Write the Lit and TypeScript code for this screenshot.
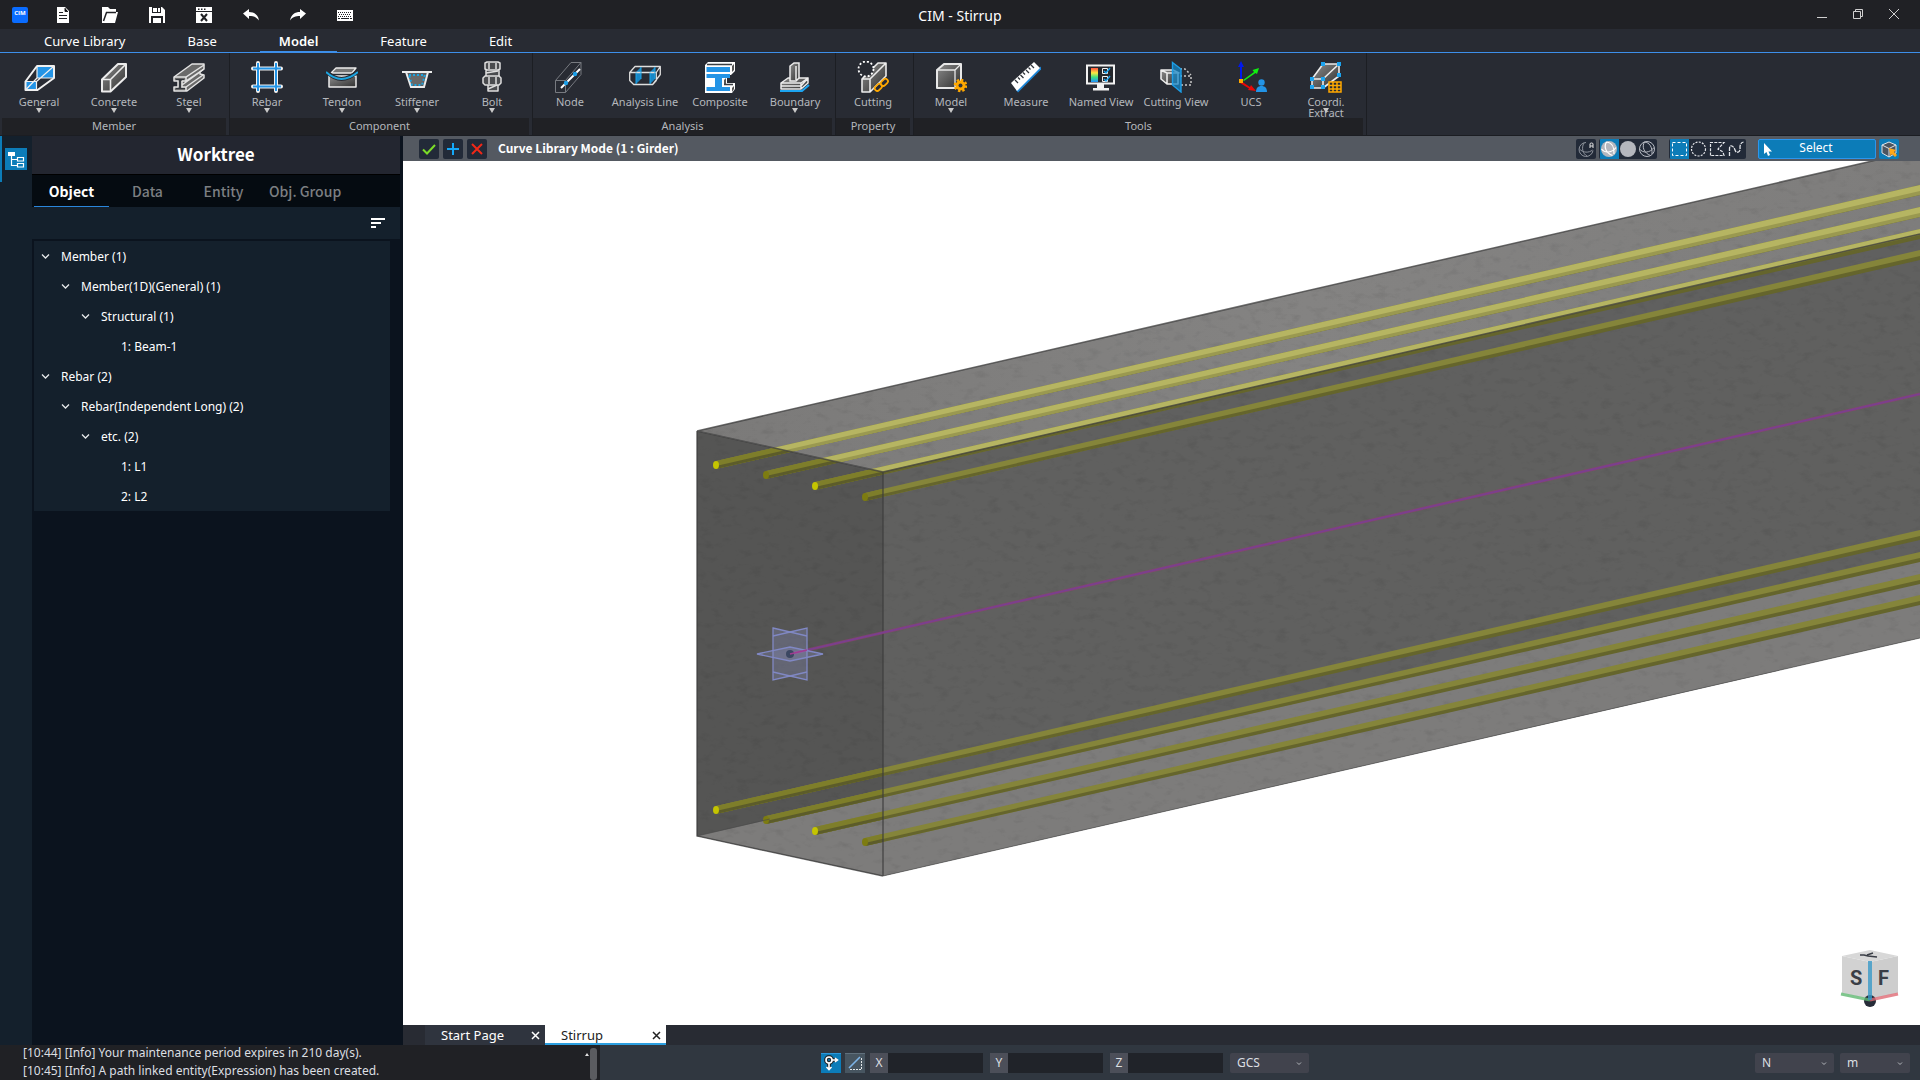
import { LitElement, html, svg, css, nothing, TemplateResult } from "lit";
import { customElement, property } from "lit/decorators.js";
import { classMap } from "lit/directives/class-map.js";

type Drawing = ReturnType<typeof svg>;

/* ---------- icons ---------- */

const icon = (size: number, body: Drawing, cls = "") => html`
  <svg class=${cls} width=${size} height=${size} viewBox="0 0 ${size} ${size}" aria-hidden="true">${body}</svg>`;

const quickIcons: [string, Drawing][] = [
  ["New", svg`<path fill="#fff" d="M2 0h8l4 4v12H2z"/><path stroke="#202125" d="M4 5.500h4M4 8.500h8M4 11.500h8M10 1v3.500h3"/>`],
  ["Open", svg`<path fill="#fff" d="M0 0h6l2 2h6v3h2l-3 11H0z"/><path fill="none" stroke="#202125" stroke-width="1.500" d="M1.500 14L4.500 5.500H14"/>`],
  ["Save", svg`<path fill="#fff" d="M0 0h13l3 3v13H0z"/><path fill="#202125" d="M3 0h9v6H3zM2 9h12v7H2z"/><path fill="#fff" d="M4 1h4v4H4zM9 1h2v4H9zM4 11h8v5H4z"/>`],
  ["Close project", svg`<path fill="#fff" d="M0 0h16v16H0z"/><path stroke="#202125" d="M0 4.500h16"/><path fill="#202125" d="M2 1.500h1.500v1.500H2zM5 1.500h1.500v1.500H5zM8 1.500h1.500v1.500H8z"/><path stroke="#202125" stroke-width="2" d="M5 7l6 7M11 7l-6 7"/>`],
  ["Undo", svg`<path fill="#fff" d="M0 6.500L6 2v3c5 0 9 2.500 10 8.500C13.500 10 10.500 9 6 9v3z"/>`],
  ["Redo", svg`<path fill="#fff" d="M16 6.500L10 2v3C5 5 1 7.500 0 13.500 2.500 10 5.500 9 10 9v3z"/>`],
  ["Keyboard", svg`<path fill="#fff" d="M0 3h16v11H0z"/><path stroke="#202125" stroke-dasharray="1 1" d="M1 5.500h14M2 7.500h12M1 9.500h14"/><path stroke="#202125" d="M1 11.500h2M4 11.500h8M13 11.500h2"/>`],
];

const ribbonIcons: Record<string, Drawing> = {
  General: svg`<path fill="#2394e6" d="M14 5h16v12H14z"/><path fill="#2394e6" d="M3 21h10v8H3z"/>
    <path fill="none" stroke="#f0f0f0" stroke-width="2" stroke-linejoin="round" d="M2.500 29V20.500L14 5h17v12L14.500 29z"/>
    <path fill="none" stroke="#f0f0f0" stroke-width="1.200" d="M3 20.500h10.500V29M13.500 20.500L30.500 5.500M14 5v12h16M14 17L3 28.500"/>`,
  Concrete: svg`<path fill="url(#metal)" stroke="#ececec" stroke-width="2" stroke-linejoin="round" d="M4 18.500L20 3h8v13L12.500 30.500H4z"/>
    <path fill="none" stroke="#ececec" stroke-width="1.600" d="M4 18.500h8.500v12M12.500 18.500L28 3"/>`,
  Steel: svg`<path fill="#6a6a6a" stroke="#e4e4e4" stroke-width="1.500" stroke-linejoin="round" d="M1 16L19 3h12v5l-4 3v2l4 1v3L14 30H1v-4h4v-6H1z"/>
    <path fill="none" stroke="#e4e4e4" stroke-width="1.500" d="M1 16h12L31 4M13 16v4L31 8M9 20h4M9 20v6h4v4M13 26l17-12M9 24l18-13"/>
    <path fill="#33363c" d="M3 18h8v1H8v8h4v1H3v-1h3v-8H3z"/>`,
  Rebar: svg`<g fill="none" stroke="#f2f2f2" stroke-width="4" stroke-linecap="round"><path d="M7 2v28M25 2v28"/><path d="M2 7.500h28M2 25.500h28"/></g>
    <g fill="none" stroke="#2394e6" stroke-width="2"><path d="M7 2v28M25 2v28"/><path d="M2 7.500h28M2 25.500h28"/></g>`,
  Tendon: svg`<path fill="url(#metal)" stroke="#ececec" stroke-width="1.500" stroke-linejoin="round" d="M3 15h27v11H3z"/>
    <path fill="#777" stroke="#ececec" stroke-width="1.300" stroke-linejoin="round" d="M5 12L10 7h20l-4 5z"/><path fill="none" stroke="#282b33" stroke-width="4" d="M1 11Q15 25 31 11"/><path fill="none" stroke="#1ca4e0" stroke-width="2" d="M0 11Q15 25 32 11"/>`,
  Stiffener: svg`<path fill="#5b5e62" stroke="#ececec" stroke-width="2" d="M1 11h30M5 11l5 15h13l4-15"/><path fill="#686868" stroke="#1ca4e0" stroke-width="2" stroke-dasharray="2 2" d="M8 14h16l-3 10H11z"/>`,
  Bolt: svg`<g fill="#4a4b4e" stroke="#dedede" stroke-width="1.500" stroke-linejoin="round"><path d="M9 2l2-1h11l2 1v6l-2 1H11L9 8zM10 9h13v7H10zM12 22h10v8H12z"/><path d="M7 17l2-2h14l2 2v5l-2 2H9l-2-2z"/></g>
    <path fill="none" stroke="#dedede" stroke-width="1.500" d="M13 2v6M20 2v6M13 16v7M20 16v7M12 28l9-4M10 12l12-2"/>`,
  Node: svg`<path fill="none" stroke="#777a80" d="M1.500 19.500h10v12h-10zM1.500 19.500L17 1.500h10v12L11.500 31.500M11.500 19.500L27 1.500"/>
    <path stroke="#fff" stroke-width="2" d="M7 27L26 8"/><circle cx="12" cy="22" r="2.200" fill="#1c9fe8"/><circle cx="21" cy="13" r="2.200" fill="#1c9fe8"/>`,
  "Analysis Line": svg`<path fill="#1787c6" d="M7 11l5-5v12l-5 5zM21 11l5-5v12l-5 5z"/><path fill="none" stroke="#dedede" stroke-width="1.300" stroke-linejoin="round" d="M.700 11.500L6 5.500h25.300l-4 6zM.700 11.500v8l4 4h19l3.600-4v-8M31.300 5.500v8l-7.600 10"/><path fill="none" stroke="#1ca4e8" d="M7 11.500V23M12 6v12M21 11.500V23M26 6v12"/>`,
  Composite: svg`<path fill="#fff" d="M1 4l3-3h27v9l-4 4h-4v8h8v6l-3 4H1z"/><path fill="#555" d="M28 5l2-2v6l-2 2zM20 19l2-2v6l-2 1zM28 27l2-2v3l-2 3z"/><path fill="#2394e6" d="M2.500 6H26v5H2.500zM2.500 13H26v4h-8v9h8v4H2.500v-4H11v-9H2.500z"/><path stroke="#3b3f44" stroke-width="1.300" d="M3 3.500h25M20 23.500h9"/>`,
  Boundary: svg`<path fill="url(#metal)" stroke="#ececec" stroke-width="1.500" stroke-linejoin="round" d="M2 22l7-5h20l-7 8H2zM2 22h20v6H2zM22 22l7-5v5l-7 6z"/><path fill="url(#metal)" stroke="#ececec" stroke-width="1.500" d="M11 5l4-3h5v15l-3 3h-6zM17 5v14"/><path fill="none" stroke="#1ca4f0" stroke-width="2" d="M1 30h22l7-6"/>`,
  Cutting: svg`<path fill="url(#metal)" stroke="#ececec" stroke-width="1.600" stroke-linejoin="round" d="M5 18L21 2h8v13L13 31H5zM5 18h8v13M13 18L29 2"/><circle cx="9" cy="8" r="7.500" fill="#282b33" stroke="#fff" stroke-width="1.800" stroke-dasharray="2 2"/>
    <g fill="none" stroke="#ffa800" stroke-width="1.800"><rect x="17" y="24" width="8" height="5" rx="2.500" transform="rotate(-45 21 26)"/><rect x="23" y="19" width="8" height="5" rx="2.500" transform="rotate(-45 27 21)"/></g>`,
  Model: svg`<path fill="url(#metal)" stroke="#e8e8e8" stroke-width="2" stroke-linejoin="round" d="M2 9l7-6h17v18l-6 6H2z"/><path fill="none" stroke="#e8e8e8" stroke-width="1.300" d="M2 9h18v18M20 9l6-6"/>
    <circle cx="25.500" cy="24.500" r="5" fill="#ffa800"/><circle cx="25.500" cy="24.500" r="5.500" fill="none" stroke="#ffa800" stroke-width="2.500" stroke-dasharray="2.300 2"/><circle cx="25.500" cy="24.500" r="2" fill="#30343b"/>`,
  Measure: svg`<path fill="#1c86d8" d="M8 31.500L31 8.500V5.500L6 29z"/><path fill="#fff" d="M1 22L24 1l6 6L7 30z"/><path stroke="#30343b" stroke-width="1.300" d="M5 19l3 3M8 16.500l2 2M10.500 14l3 3M13 11.500l2 2M16 9l3 3M18.500 6.500l2 2M21 4l3 3"/>`,
  "Named View": svg`<path fill="#24272c" stroke="#f2f2f2" stroke-width="2" d="M2 4.500h27v18H2z"/><path fill="#f2f2f2" d="M12 23h7v4h5v2.500H8V27h4z"/><path fill="url(#contour)" d="M6 7h7v14H6z"/>
    <path fill="none" stroke="#f2f2f2" d="M17.500 7.500h5v5h-5zM17.500 15.500h5v5h-5z"/><path fill="none" stroke="#1ca4f0" stroke-width="1.400" d="M19 10l2 2 4-5M19 18l2 2 4-5"/>`,
  "Cutting View": svg`<path fill="url(#metal)" stroke="#ececec" stroke-width="1.600" stroke-linejoin="round" d="M1 9l6 3v11l-6-5zM1 9h12l6 3H7M7 12h11v11H7"/><path fill="none" stroke="#c8c8c8" stroke-width="1.500" stroke-dasharray="2 2" d="M20 15h11v9H20M20 8h5l6 6"/><path fill="#1787c6" fill-opacity=".75" stroke="#1c9fe8" stroke-width="1.400" d="M12.500 1.500L21 8v23l-8.500-7z"/>`,
  UCS: svg`<path fill="#0018f0" d="M6 0l3 6H7v14H5V6H3z"/><path fill="#10ef10" d="M8 19l11-8-1.500-2L24 7l-2 6-1.500-1L9 20z"/><path fill="#e80808" d="M6 20l9 6 1-2 5 6-8-1 1-1.500L5 22z"/><path fill="#ffa800" d="M4 18h4v4H4z"/>
    <circle cx="26.500" cy="21.500" r="3.200" fill="#2394e6"/><path fill="#2394e6" d="M21 31c0-4 2-6 5.500-6s5.500 2 5.500 6z"/>`,
  "Coordi. Extract": svg`<path fill="url(#metal)" stroke="#ececec" stroke-width="1.600" stroke-linejoin="round" d="M2 18L13 3h16v12L13 27H2zM2 18h11v9M13 18L29 3"/>
    <path fill="#1ca4f0" d="M0 16h4v4H0zM0 24h4v4H0zM11 16h4v4h-4zM11 24h4v4h-4zM11 1h4v4h-4zM27 1h4v4h-4zM27 12h4v4h-4z"/><path fill="#282b33" stroke="#ffa800" stroke-width="1.500" d="M19 21h12v10H19zM19 24.500h12M19 28h12M23 21v10M27 21v10"/>`,
};

const sharedDefs = svg`
  <defs>
    <linearGradient id="metal" x1="0" y1="0" x2="1" y2="1"><stop offset="0" stop-color="#8c8c8c"/><stop offset="1" stop-color="#303030"/></linearGradient>
    <linearGradient id="contour" x1="0" y1="0" x2="0" y2="1"><stop offset="0" stop-color="#ff5040"/><stop offset=".35" stop-color="#ffe840"/><stop offset=".65" stop-color="#40e080"/><stop offset="1" stop-color="#2090ff"/></linearGradient>
  </defs>`;

const meridians = "M6.500 3C3.500 8 6 14 12.500 16.500M1.500 10C5 14.500 12 14 16 8.500M6.500 3C11.500 3.500 14.500 8 14 15";

const displayIcons: [string, Drawing, boolean][] = [
  ["Shaded with edges", svg`<circle cx="9" cy="10" r="8" fill="#b4b7be"/><path fill="none" stroke="#fff" stroke-width="1.200" d=${meridians}/>`, true],
  ["Shaded", svg`<circle cx="9" cy="10" r="8" fill="#b4b7be"/>`, false],
  ["Wireframe", svg`<circle cx="9" cy="10" r="7.500" fill="none" stroke="#b8bcc4"/><path fill="none" stroke="#b8bcc4" d=${meridians}/>`, false],
];

const pickIcons: [string, Drawing, boolean][] = [
  ["Window", svg`<path fill="none" stroke="#fff" stroke-dasharray="3 2" d="M2.500 3.500h14v13h-14z"/>`, true],
  ["Circle", svg`<circle cx="9.500" cy="10" r="7" fill="none" stroke="#e4e6ea" stroke-width="1.200" stroke-dasharray="2 1.300"/>`, false],
  ["Polygon", svg`<path fill="none" stroke="#e4e6ea" stroke-width="1.200" stroke-dasharray="3 1.200" d="M2.500 16.500v-13H16L10 10l5 3 1 3.500z"/>`, false],
  ["Polyline", svg`<path fill="none" stroke="#e4e6ea" stroke-width="1.300" stroke-dasharray="4 1" d="M2.500 17V10q0-4 2.500-3 2 1 3 4t3.500 2q2-1 1.500-5 0-4 3.500-5"/>`, false],
];

/* ---------- data ---------- */

type Tool = [label: string, hasMenu: boolean];
const ribbon: { name: string; tools: Tool[] }[] = [
  { name: "Member", tools: [["General", true], ["Concrete", true], ["Steel", true]] },
  { name: "Component", tools: [["Rebar", true], ["Tendon", true], ["Stiffener", true], ["Bolt", true]] },
  { name: "Analysis", tools: [["Node", false], ["Analysis Line", false], ["Composite", false], ["Boundary", true]] },
  { name: "Property", tools: [["Cutting", false]] },
  { name: "Tools", tools: [["Model", true], ["Measure", false], ["Named View", false], ["Cutting View", false], ["UCS", false], ["Coordi. Extract", true]] },
];

const menus = ["Curve Library", "Base", "Model", "Feature", "Edit"];

interface TreeNode { label: string; children?: TreeNode[] }
const tree: TreeNode[] = [
  { label: "Member (1)", children: [{ label: "Member(1D)(General) (1)", children: [{ label: "Structural (1)", children: [{ label: "1: Beam-1" }] }] }] },
  { label: "Rebar (2)", children: [{ label: "Rebar(Independent Long) (2)", children: [{ label: "etc. (2)", children: [{ label: "1: L1" }, { label: "2: L2" }] }] }] },
];

const baseStyles = css`
  * { box-sizing: border-box; }
  button, input, select { font: inherit; color: inherit; margin: 0; padding: 0; border: 0; background: none; border-radius: 0; }
  button { display: inline-flex; align-items: center; justify-content: center; }
  svg { display: block; flex: none; }
`;

/* ---------- title bar ---------- */

@customElement("title-bar")
class TitleBar extends LitElement {
  static styles = [baseStyles, css`
    :host { display: grid; grid-template-columns: 1fr auto 1fr; align-items: center; height: 29px; background: #202125; color: #fff; }
    .quick { display: flex; align-items: center; padding-left: 12px; }
    .logo { display: grid; place-items: start center; width: 16px; height: 16px; margin-right: 11px; border-radius: 2px; background: #0a6cff; font: 700 6px/12px "Open Sans", sans-serif; }
    .quick button { width: 47px; height: 28px; }
    h1 { margin: 0; padding-top: 2px; font-size: 14px; font-weight: 400; line-height: 27px; }
    .window { display: flex; justify-content: flex-end; padding-right: 8px; }
    .window button { width: 36px; height: 28px; padding-bottom: 2px; }
  `];
  render() {
    return html`
      <div class="quick"><span class="logo">CIM</span>
        ${quickIcons.map(([label, body]) => html`<button aria-label=${label}>${icon(16, body)}</button>`)}
      </div>
      <h1>CIM - Stirrup</h1>
      <div class="window">
        <button aria-label="Minimize">${icon(12, svg`<path stroke="#d0d0d0" d="M1 9.500h10"/>`)}</button>
        <button aria-label="Restore">${icon(12, svg`<path fill="none" stroke="#d0d0d0" d="M1.500 3.500h7v7h-7zM3.500 3V1.500h7v7H9"/>`)}</button>
        <button aria-label="Close">${icon(12, svg`<path stroke="#d0d0d0" d="M1 1l10 10M11 1L1 11"/>`)}</button>
      </div>`;
  }
}

/* ---------- ribbon ---------- */

@customElement("ribbon-bar")
class RibbonBar extends LitElement {
  static styles = [baseStyles, css`
    :host { display: block; background: #282b33; color: #b4b7bc; border-bottom: 1px solid #1b1d22; }
    .defs { position: absolute; width: 0; height: 0; }
    .menus { display: flex; height: 24px; padding-left: 13px; border-bottom: 1px solid #3d8fea; color: #fff; font-size: 13px; line-height: 20px; }
    .menus button { height: 24px; margin: 0 12px; padding: 2px 19px 0; border-bottom: 2px solid transparent; }
    .menus .current { border-color: #3d8fea; font-weight: 600; }
    .groups { display: flex; padding-left: 2px; }
    .group { padding: 6px 2px 0 0; border-right: 1px solid #1c1e23; }
    .tools { display: flex; height: 59px; }
    .tool { position: relative; display: flex; flex-direction: column; justify-content: flex-start; width: 75px; padding: 2px 1px 0 0; font-size: 11px; line-height: 11px; }
    .label { width: 60px; margin-top: 3px; }
    .wide { width: auto; white-space: nowrap; }
    .caret { position: absolute; top: 49px; left: 34px; border: 3px solid transparent; border-top: 5px solid #c8c8c8; border-bottom: 0; }
    .name { margin: 0; margin-right: 1px; padding-bottom: 2px; background: #202125; text-align: center; font-size: 11px; font-weight: 400; line-height: 15px; }
  `];
  render() {
    return html`
      <nav class="menus">
        ${menus.map((m) => html`<button class=${classMap({ current: m === "Model" })}>${m}</button>`)}
      </nav>
      <svg class="defs" aria-hidden="true">${sharedDefs}</svg>
      <div class="groups">
        ${ribbon.map((g) => html`
          <section class="group">
            <div class="tools">
              ${g.tools.map(([label, hasMenu]) => html`
                <button class="tool">
                  ${icon(32, ribbonIcons[label])}
                  <span class=${classMap({ label: true, wide: label !== "Coordi. Extract" })}>${label}</span>
                  ${hasMenu ? html`<i class="caret"></i>` : nothing}
                </button>`)}
            </div>
            <h2 class="name">${g.name}</h2>
          </section>`)}
      </div>`;
  }
}

/* ---------- work tree ---------- */

@customElement("work-tree")
class WorkTree extends LitElement {
  static styles = [baseStyles, css`
    :host { display: flex; flex: none; width: 403px; background: #0b131e; color: #fff; }
    .rail { width: 32px; background: #14202c; }
    .rail button { width: 32px; height: 46px; padding-right: 2px; border-left: 2px solid #0c7cb8; }
    .rail span { display: grid; place-items: center; width: 22px; height: 22px; background: #0c7cb8; }
    .panel { flex: 1; display: flex; flex-direction: column; margin-right: 3px; }
    h2 { margin: 0; height: 39px; background: #232630; border-bottom: 1px solid #000; text-align: center; font: 700 17px/35px "Noto Sans CJK KR", "Noto Sans", sans-serif; }
    .tabs { display: flex; gap: 1px; height: 32px; padding-left: 2px; background: #050b11; color: #7c7f82; }
    .tabs button { min-width: 75px; padding: 0 7px; border-bottom: 1px solid transparent; font: 500 14px/30px "Noto Sans CJK KR", "Noto Sans", sans-serif; }
    .tabs .current { color: #fff; border-color: #2a86dc; font-weight: 700; }
    .bar { display: flex; justify-content: flex-end; align-items: center; height: 32px; padding-right: 14px; background: #14202c; }
    .tree { margin: 2px 10px 0 2px; background: #14202c; }
    ul { margin: 0; padding: 0; list-style: none; }
    ul ul { padding-left: 20px; }
    .row { display: flex; align-items: center; height: 30px; padding: 1px 0 0 5px; font-size: 12px; line-height: 28px; }
    .row button { width: 13px; height: 28px; margin-right: 9px; }
    .leaf { padding-left: 27px; }
  `];
  private nodes(items: TreeNode[]): TemplateResult {
    return html`<ul>${items.map((n) => html`
      <li>
        <div class=${classMap({ row: true, leaf: !n.children })}>
          ${n.children ? html`<button aria-label="Collapse ${n.label}">${icon(9, svg`<path fill="none" stroke="#e6e8ea" stroke-width="1.300" d="M1 2.500L4.500 6 8 2.500"/>`)}</button>` : nothing}
          <span>${n.label}</span>
        </div>
        ${n.children ? this.nodes(n.children) : nothing}
      </li>`)}</ul>`;
  }
  render() {
    return html`
      <div class="rail"><button aria-label="Worktree"><span>
        ${icon(18, svg`<path fill="#fff" d="M1 2h7v4H1z"/><path fill="none" stroke="#fff" stroke-width="1.200" d="M4.500 6v9.500H10M4.500 9.500H10M10.500 7.500h6v3.500h-6zM10.500 13.500h6V17h-6z"/>`)}
      </span></button></div>
      <div class="panel">
        <h2>Worktree</h2>
        <div class="tabs">
          ${["Object", "Data", "Entity", "Obj. Group"].map((t, i) => html`<button class=${classMap({ current: i === 0 })}>${t}</button>`)}
        </div>
        <div class="bar"><button aria-label="Sort">${icon(16, svg`<path fill="#fff" d="M1 3h14v2H1zM1 7h10v2H1zM1 11h5v2H1z"/>`)}</button></div>
        <div class="tree">${this.nodes(tree)}</div>
      </div>`;
  }
}

/* ---------- model view ---------- */

const bars: [number, number, number][] = [
  [716, 465, 190], [766, 475, 212], [815, 486, 234], [865, 497, 255],
  [716, 810, 535], [766, 820, 557], [815, 831, 579], [865, 842, 600],
];
const rod = ([x, y, end]: [number, number, number], light: string, dark: string) => svg`
  <path fill=${light} d="M${x} ${y - 4}L1920 ${end - 5}v9L${x} ${y + 4}z"/>
  <path fill=${dark} d="M${x} ${y + 1}L1920 ${end + 1}v4L${x} ${y + 4}z"/>`;

@customElement("model-view")
class ModelView extends LitElement {
  static styles = [baseStyles, css`
    :host { position: relative; display: block; flex: 1; min-height: 0; background: #fff; overflow: hidden; }
    .scene { position: absolute; inset: 0; width: 100%; height: 100%; }
    .cube { position: absolute; right: 16px; bottom: 15px; width: 68px; height: 68px; font: 700 20px "Roboto", sans-serif; }
  `];
  render() {
    return html`
      <svg class="scene" viewBox="403 161 1517 864" preserveAspectRatio="xMidYMid slice" role="img" aria-label="Girder with longitudinal rebars">
        <defs>
          <clipPath id="top"><path d="M697 431L1920 150v84L883 472z"/></clipPath>
          <clipPath id="solid"><path d="M697 431L1920 150v488L883 876 697 836z"/></clipPath>
          <clipPath id="end"><path d="M697 431l186 41v404l-186-40z"/></clipPath>
          <filter id="grain" x="0" y="0" width="100%" height="100%">
            <feTurbulence type="fractalNoise" baseFrequency=".08 .14" numOctaves="5" seed="7"/>
            <feColorMatrix values="0 0 0 0 0  0 0 0 0 0  0 0 0 0 0  1.500 0 0 0 -.800"/>
          </filter>
          <linearGradient id="lit" x1="0" x2="1"><stop offset="0" stop-color="#7b7a79"/><stop offset=".5" stop-color="#848382"/><stop offset="1" stop-color="#7e7d7c"/></linearGradient>
        </defs>
        <path fill="#60605f" d="M883 472L1920 234v404L883 876z"/>
        <path fill="#555554" d="M697 431l186 41v404l-186-40z"/>
        <path fill="#7d7c7b" d="M697 836L1920 557v81L883 876z"/>
        <path fill="url(#lit)" d="M697 431L1920 150v84L883 472z"/>
        <g clip-path="url(#solid)"><path filter="url(#grain)" opacity=".12" d="M697 150h1223v730H697z"/></g>
        ${bars.map((b) => rod(b, "#85853a", "#65652c"))}
        <g clip-path="url(#end)">${bars.map((b) => rod(b, "#7e7e2a", "#5c5c2a"))}</g>
        <g clip-path="url(#top)">${bars.slice(0, 4).map((b) => rod(b, "#b6b562", "#9a9950"))}</g>
        ${bars.map(([x, y], i) => svg`<ellipse cx=${x} cy=${y} rx="3" ry="4" fill=${i % 2 ? "#7d7c10" : "#c4c400"}/>`)}
        <path fill="none" stroke="#3c3c3c" stroke-opacity=".75" stroke-width="1.500" d="M697 431L1920 150M697 431l186 41M883 472v404M697 431v405l186 40M883 472L1920 234"/>
        <path fill="none" stroke="#4a4a4a" stroke-opacity=".6" d="M883 876L1920 638M697 836L770 819"/>
        <path stroke="#913d78" stroke-width="3" stroke-opacity=".7" d="M790 654L1920 394"/>
        <path stroke="#7a3f92" stroke-width="1.500" d="M790 654L1920 394"/>
        <g stroke="#8088c4" stroke-width="1.300" fill="#8c92c8" fill-opacity=".28">
          <path d="M773 628l17 4 17-4v52l-17-4-17 4z"/><path fill="none" d="M773 636l17-4 17 4M773 672l17 4 17-4"/><path d="M757 654l33-7 33 7-33 7z"/>
        </g>
        <circle cx="790" cy="654" r="4" fill="#3b4762"/><path stroke="#a03c90" stroke-width="1.500" d="M790 654l17-4"/>
      </svg>
      <svg class="cube" viewBox="0 0 68 68" role="img" aria-label="View cube">
        <path fill="#d2d2d2" d="M6 14l28 6v37L6 51z"/><path fill="#cdcdcd" d="M62 14l-28 6v37l28-6z"/><path fill="#d8d8d8" d="M6 14l28-6 28 6-28 6z"/>
        <path fill="none" stroke="#3a3e46" stroke-width="1.500" d="M24 13h4l4 1 9 1M31 13l6-2"/>
        <text x="14" y="43" fill="#3a3e46">S</text><text x="42" y="43" fill="#3a3e46">F</text>
        <circle cx="34" cy="59" r="6" fill="#262c38"/>
        <path stroke="#5fb870" stroke-opacity=".8" stroke-width="3" d="M5 52l29 6"/><path stroke="#e06a74" stroke-opacity=".8" stroke-width="3" d="M62 52l-28 6"/><path stroke="#3a9ac8" stroke-opacity=".8" stroke-width="4" d="M34 19v39"/>
      </svg>`;
  }
}

@customElement("view-header")
class ViewHeader extends LitElement {
  static styles = [baseStyles, css`
    :host { display: flex; align-items: center; height: 25px; padding: 0 21px 0 16px; background: #545961; color: #fff; }
    .act { width: 20px; height: 20px; margin-right: 4px; border-radius: 2px; background: #222a38; }
    h2 { flex: 1; margin: 0 0 0 7px; padding-bottom: 2px; font: 700 12px/23px "Noto Sans CJK KR", "Noto Sans", sans-serif; }
    .set { display: flex; height: 20px; margin-left: 12px; padding-left: 1px; border-radius: 2px; background: #222a38; overflow: hidden; }
    .set button { width: 19px; height: 20px; }
    .near { margin-left: 3px; }
    .on, .box { background: #0c7cb8; }
    .select { position: relative; width: 118px; height: 20px; margin-left: 12px; padding: 0 2px 2px 0; border: 1px solid #2c96ee; border-radius: 2px; background: #0c7cb8; font-size: 12px; line-height: 16px; }
    .select svg { position: absolute; left: 2px; top: 2px; }
    .box { width: 20px; height: 20px; margin-left: 3px; border-radius: 2px; }
  `];
  private group(items: [string, Drawing, boolean][], cls: string) {
    return html`<div class="set ${cls}">${items.map(([label, body, on]) => html`
      <button class=${classMap({ on })} aria-label=${label}><svg width="19" height="20" viewBox="0 0 19 20">${body}</svg></button>`)}</div>`;
  }
  render() {
    return html`
      <button class="act" aria-label="Apply">${icon(14, svg`<path fill="none" stroke="#7bdc28" stroke-width="2" d="M1 7.500l4 4L13 3"/>`)}</button>
      <button class="act" aria-label="Add">${icon(14, svg`<path stroke="#14a8f8" stroke-width="2" d="M7 1v12M1 7h12"/>`)}</button>
      <button class="act" aria-label="Cancel">${icon(14, svg`<path stroke="#f02818" stroke-width="2" d="M2 2l10 10M12 2L2 12"/>`)}</button>
      <h2>Curve Library Mode (1 : Girder)</h2>
      ${this.group([["Auto rotate", svg`<path fill="none" stroke="#8e939c" d="M9 3.500a7 7 0 1 0 7 8M7 4C4 9 6 15 10 17M2.500 10C6 14 12 14 15.500 11"/><path fill="none" stroke="#e4e4e4" d="M13 9V5q0-1 1.500-1T16 5v4M13 7h3"/>`, false]], "")}
      ${this.group(displayIcons, "near")}
      ${this.group(pickIcons, "")}
      <button class="select">${icon(14, svg`<path fill="#fff" d="M3 1v11l2.500-2 1.500 4 2-1-1.500-3.500H11z"/>`)}Select</button>
      <button class="box" aria-label="Pick solid">${icon(18, svg`<path fill="#4d5560" stroke="#dfe3e8" d="M2 5l7-3 7 3v8l-7 4-7-4zM2 5l7 3.500V17M9 8.500L16 5"/><path fill="#ffa818" d="M9 8l7 2-2 2 3 3-2 2-3-3-1.500 2z"/>`)}</button>`;
  }
}

@customElement("document-tabs")
class DocumentTabs extends LitElement {
  static styles = [baseStyles, css`
    :host { display: flex; height: 20px; padding-left: 22px; background: #282b33; color: #fff; }
    .tab { display: flex; align-items: center; justify-content: space-between; width: 120px; padding: 0 5px 0 16px; background: #2f343e; font-size: 13px; }
    .tab button { line-height: 16px; }
    .open { width: 121px; padding-top: 2px; background: #fff; color: #222; border-bottom: 2px solid #2c9fe0; }
  `];
  render() {
    return html`${["Start Page", "Stirrup"].map((t, i) => html`
      <div class=${classMap({ tab: true, open: i === 1 })}>
        <button>${t}</button>
        <button aria-label="Close ${t}">${icon(9, svg`<path stroke="currentColor" stroke-width="1.500" d="M1 1l7 7M8 1L1 8"/>`)}</button>
      </div>`)}`;
  }
}

/* ---------- bottom bar ---------- */

@customElement("status-bar")
class StatusBar extends LitElement {
  @property({ attribute: false }) axes = ["X", "Y", "Z"];
  static styles = [baseStyles, css`
    :host { display: flex; flex: none; height: 35px; background: #303740; color: #dcdfe2; font-size: 12px; }
    .log { display: flex; justify-content: space-between; width: 600px; background: #202125; }
    .lines { padding-left: 23px; line-height: 19px; }
    .lines p { margin: 0; }
    .lines p:first-child { height: 16px; line-height: 15px; }
    .scroll { display: flex; gap: 1px; padding: 3px 3px 0 0; }
    .up { margin-top: 5px; height: 3px; border: 2px solid transparent; border-bottom: 3px solid #e0e0e0; border-top: 0; }
    .thumb { width: 7px; border-radius: 3px; background: #5b5c60; }
    .fields { display: flex; flex: 1; align-items: center; padding: 0 10px 0 221px; }
    .snap { width: 20px; height: 20px; margin-right: 4px; background: #475560; border-top: 1px solid #60707c; }
    .on { background: #0c7cb8; border-color: #2c96d8; }
    label { display: flex; height: 20px; margin: 0 7px 0 0; }
    .first { margin-left: 1px; }
    label span { width: 18px; background: #4c4f59; text-align: center; line-height: 20px; }
    label input { width: 95px; padding: 0 4px; background: #202329; }
    .pick { position: relative; display: flex; height: 20px; }
    .pick select { appearance: none; width: 79px; padding-left: 7px; border-radius: 2px; background: #41434d; line-height: 20px; }
    .pick svg { position: absolute; right: 7px; top: 8px; pointer-events: none; }
    .narrow select { width: 70px; }
    .gap { flex: 1; }
    .unit { margin-right: 6px; }
  `];
  private pick(value: string, label: string, cls = "") {
    return html`<div class="pick ${cls}"><select aria-label=${label}><option>${value}</option></select>
      ${icon(6, svg`<path fill="none" stroke="#b4b7bc" d="M1 1.500l2 2 2-2"/>`)}</div>`;
  }
  render() {
    return html`
      <div class="log">
        <div class="lines"><p>[10:44] [Info] Your maintenance period expires in 210 day(s).</p><p>[10:45] [Info] A path linked entity(Expression) has been created.</p></div>
        <div class="scroll"><i class="up"></i><i class="thumb"></i></div>
      </div>
      <div class="fields">
        <button class="snap on" aria-label="Ortho">${icon(16, svg`<g fill="none" stroke="#202a30" stroke-width="4"><circle cx="6" cy="5" r="3"/><path d="M6 8v6M9 5h5"/></g><g fill="none" stroke="#fff" stroke-width="1.600"><circle cx="6" cy="5" r="3"/><path d="M6 8v6M9 5h5M12 3l2.500 2L12 7M3.500 12L6 14.500 8.500 12"/></g>`)}</button>
        <button class="snap" aria-label="Relative">${icon(16, svg`<path stroke="#7db4e8" stroke-width="1.600" d="M2 13L13 2"/><path fill="none" stroke="#e4e8ea" stroke-dasharray="2 1" d="M14.500 3v11.500H2"/>`)}</button>
        ${this.axes.map((a, i) => html`<label class=${classMap({ first: i === 0 })}><span>${a}</span><input type="text" /></label>`)}
        ${this.pick("GCS", "Coordinate system")}
        <div class="gap"></div>
        ${this.pick("N", "Force unit", "unit")}
        ${this.pick("m", "Length unit", "narrow")}
      </div>`;
  }
}

/* ---------- page ---------- */

@customElement("app-root")
class AppRoot extends LitElement {
  static styles = css`
    :host { display: flex; flex-direction: column; height: 100vh; font-family: "Noto Sans", "Open Sans", sans-serif; background: #282b33; }
    .main { display: flex; flex: 1; min-height: 0; }
    .work { display: flex; flex: 1; flex-direction: column; min-width: 0; }
  `;
  render() {
    return html`
      <title-bar></title-bar>
      <ribbon-bar></ribbon-bar>
      <div class="main">
        <work-tree></work-tree>
        <div class="work">
          <view-header></view-header>
          <model-view></model-view>
          <document-tabs></document-tabs>
        </div>
      </div>
      <status-bar></status-bar>`;
  }
}
